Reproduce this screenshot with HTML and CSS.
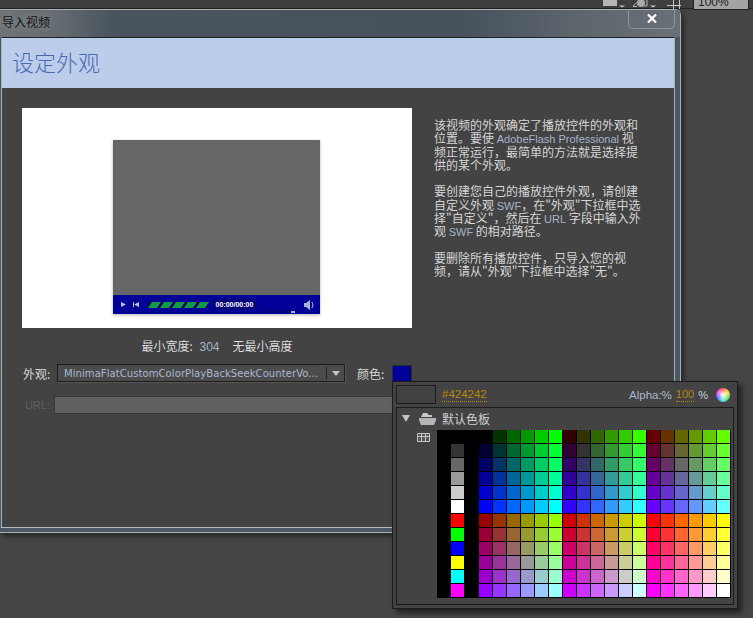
FILE: index.html
```html
<!DOCTYPE html>
<html lang="zh-CN">
<head>
<meta charset="utf-8">
<title>导入视频</title>
<link rel="stylesheet" href="styles.css">
<script src="palette.js" defer></script>
</head>
<body>

<div class="topbar">
	<svg class="topIcons" width="90" height="9" viewBox="0 0 90 9">
		<path d="M0 0h14v6H0z" fill="#b5b5b5"/>
		<path d="M16 5.500h6l-3 2z" fill="#ccc"/>
		<path d="M30 6l7-6M30 6.500h4" stroke="#b5b5b5" fill="none"/>
		<circle cx="38" cy="3" r="4" fill="#a8a8a8"/>
		<path d="M44 0v6h-3" stroke="#b5b5b5" fill="none"/>
		<path d="M47 5.500h6l-3 2z" fill="#ccc"/>
		<path d="M70.500 0v9M76.500 0v9M64 5.500h14" stroke="#c8c8c8" fill="none"/>
	</svg>
	<div class="zoomBox">100%</div>
</div>

<div class="dialog">
	<div class="titlebar">
		<span class="titleText">导入视频</span>
		<div class="closeBtn">
			<svg width="10" height="9" viewBox="0 0 10 9"><path d="M1 .5l8 8M9 .5l-8 8" stroke="#fff" stroke-width="2.200"/></svg>
		</div>
	</div>
	<div class="dialogBody">
		<div class="banner">设定外观</div>
		<div class="mainRow">
			<div class="preview">
				<div class="player">
					<div class="video"></div>
					<div class="controls">
						<svg width="30" height="9" viewBox="0 0 30 9"><path d="M8 2l5 2.500-5 2.500z" fill="#b8c0dd"/><path d="M20 2v5h1V2zM26 2l-5 2.500 5 2.500z" fill="#b8c0dd"/></svg>
						<div class="seekBar">
							<i></i><i></i><i></i><i></i><i></i>
						</div>
						<div class="timeBox">00:00/00:00</div>
						<div class="volume"><b></b></div>
						<svg class="speaker" width="11" height="10" viewBox="0 0 11 10"><path d="M0 3h2l4-3v10L2 7H0z" fill="#aab2d0"/><path d="M8 2q2 3 0 6" stroke="#aab2d0" fill="none"/></svg>
					</div>
				</div>
			</div>
			<div class="helpText">
				<p>该视频的外观确定了播放控件的外观和<br>位置。要使 <span class="latin">AdobeFlash Professional</span> 视<br>频正常运行，最简单的方法就是选择提<br>供的某个外观。</p>
				<p>要创建您自己的播放控件外观，请创建<br>自定义外观 <span class="latin">SWF</span>，在"外观"下拉框中选<br>择"自定义"，然后在 <span class="latin">URL</span> 字段中输入外<br>观 <span class="latin">SWF</span> 的相对路径。</p>
				<p>要删除所有播放控件，只导入您的视<br>频，请从"外观"下拉框中选择"无"。</p>
			</div>
		</div>
		<div class="sizeNote">最小宽度: <span class="num">304</span>&emsp;无最小高度</div>
		<div class="skinRow">
			<label>外观:</label>
			<div class="select">
				<span class="selectText">MinimaFlatCustomColorPlayBackSeekCounterVo...</span>
				<span class="selectArrow"></span>
			</div>
			<label class="colorLabel">颜色:</label>
			<div class="colorChip"></div>
		</div>
		<div class="urlRow">
			<label>URL:</label>
			<div class="urlInput"></div>
		</div>
	</div>
</div>

<div class="picker">
	<div class="pickerTop">
		<div class="curSwatch"></div>
		<span class="hexValue">#424242</span>
		<span class="alphaLabel">Alpha:%</span>
		<span class="alphaValue">100</span>
		<span class="alphaPct">%</span>
		<div class="wheel"></div>
	</div>
	<div class="pickerPanel">
		<div class="folderRow">
			<span class="tri"></span>
			<svg width="17" height="12" viewBox="0 0 17 12"><path d="M4 0h4l2 2h3v2H2z" fill="#c8c8c8"/><path d="M0 5h17v2l-2 5H2L0 7z" fill="#b4b4b4"/></svg>
			<span class="folderName">默认色板</span>
		</div>
		<div class="swatchRow">
			<svg class="gridIcon" width="13" height="9" viewBox="0 0 13 9"><path d="M.5.500h12v8H.5zM.5 3.500h12M4.500.5v8M8.500.5v8" fill="#555" stroke="#c4c4c4"/></svg>
			<div class="swatches" id="swatches"></div>
		</div>
	</div>
</div>

</body>
</html>
```

FILE: styles.css
```css
html, body{
	margin: 0;
	height: 100%;
	overflow: hidden;
}
body{
	position: relative;
	background: #454545;
	font: 12px "Noto Sans CJK SC", "Liberation Sans", sans-serif;
	color: #d6d6d6;
}
.topbar{
	height: 8px;
	background: #3f3f3f;
	border-bottom: 1px solid #222;
	position: relative;
}
.topIcons{
	position: absolute;
	left: 603px;
	top: 0;
}
.zoomBox{
	position: absolute;
	left: 693px;
	top: -5px;
	width: 50px;
	height: 13px;
	border: 1px solid #222;
	background: #a3a3a3;
	color: #222;
	font: 12px/13px "Liberation Sans", sans-serif;
	padding-left: 4px;
	box-sizing: content-box;
}

/* dialog */
.dialog{
	position: absolute;
	left: -1px;
	top: 9px;
	width: 680px;
	height: 522px;
	background: #4c5863;
	border: 1px solid #a9b0b6;
	border-top-right-radius: 6px;
	box-shadow: 3px 3px 5px rgba(0,0,0,.45);
	display: flex;
	flex-direction: column;
}
.titlebar{
	height: 27px;
	flex: none;
	position: relative;
	background: linear-gradient(90deg, #6d7277 0, #666c72 8%, #48535d 17%, #47525c 68%, #5c646c 84%, #6a7077 100%);
}
.titleText{
	position: absolute;
	left: 2px;
	top: 3px;
	color: #111;
	line-height: 18px;
	text-shadow: 0 0 6px #9a9a9a;
}
.closeBtn{
	position: absolute;
	right: 5px;
	top: -1px;
	width: 45px;
	height: 19px;
	border: 1px solid #8d949b;
	border-top: 0;
	border-radius: 0 0 5px 5px;
	display: flex;
	align-items: center;
	justify-content: center;
}
.dialogBody{
	margin: 0 5px 4px 1px;
	flex: 1;
	background: #434343;
	border: 1px solid #b6bcc2;
	border-top: 1px solid #222;
	border-right-color: #a9b0b6;
	border-left-color: #a9b0b6;
}
.banner{
	height: 50px;
	background: #bccdeb;
	color: #4a6ab0;
	font-size: 22px;
	font-weight: 300;
	line-height: 46px;
	padding-left: 10px;
}
.mainRow{
	display: flex;
	padding: 20px 0 0 20px;
}
.preview{
	width: 390px;
	height: 220px;
	background: #fff;
	padding: 32px 0 0 91px;
	box-sizing: border-box;
	flex: none;
}
.player{
	width: 207px;
	box-shadow: 0 1px 3px rgba(0,0,0,.3);
}
.video{
	height: 155px;
	background: #666;
}
.controls{
	height: 19px;
	background: #000099;
	display: flex;
	align-items: center;
}
.seekBar{
	width: 60px;
	height: 6px;
	margin-left: 5px;
	background: #00006b;
	display: flex;
	gap: 3px;
	padding-left: 2px;
	flex: none;
	box-sizing: border-box;
}
.seekBar i{
	width: 9px;
	height: 6px;
	background: #119944;
	transform: skewX(-35deg);
}
.timeBox{
	width: 43px;
	margin-left: 5px;
	background: #00007a;
	color: #fff;
	font: bold 7px/11px "Liberation Sans", sans-serif;
	text-align: center;
	flex: none;
}
.volume{
	width: 33px;
	height: 7px;
	margin: 4px 0 0 6px;
	border-bottom: 1px solid #000066;
	position: relative;
	flex: none;
}
.volume b{
	position: absolute;
	right: 0;
	bottom: -3px;
	width: 4px;
	height: 2px;
	background: #aab2d0;
}
.speaker{
	margin-left: 9px;
}
.helpText{
	margin-left: 22px;
	width: 230px;
	line-height: 13.3px;
	padding-top: 10px;
	white-space: nowrap;
}
.helpText p{
	margin: 0 0 13.3px;
}
.latin{
	color: #a5b4cc;
	font-family: "Liberation Sans", sans-serif;
	font-size: 11px;
	line-height: 0;
}
.sizeNote{
	width: 390px;
	margin: 9px 0 0 20px;
	height: 18px;
	line-height: 18px;
	text-align: center;
	color: #dcdcdc;
}
.num{
	color: #a5b4cc;
	font-family: "Liberation Sans", sans-serif;
	margin: 0 1px 0 4px;
}
.skinRow{
	display: flex;
	align-items: center;
	margin: 9px 0 0 21px;
	height: 18px;
}
.skinRow label{
	width: 34px;
	flex: none;
}
.select{
	width: 288px;
	height: 18px;
	box-sizing: border-box;
	background: #4b4b4b;
	border: 1px solid #1c1c1c;
	box-shadow: 1px 1px 0 #555;
	display: flex;
	align-items: center;
	padding-left: 6px;
	flex: none;
}
.selectText{
	flex: 1;
	color: #a9b8d0;
	font: 10px "DejaVu Sans", sans-serif;
	letter-spacing: .08px;
	white-space: nowrap;
	overflow: hidden;
}
.selectArrow{
	width: 17px;
	height: 12px;
	border-left: 1px solid #222;
	position: relative;
	flex: none;
}
.selectArrow:after{
	content: "";
	position: absolute;
	left: 5px;
	top: 4px;
	border: 4px solid transparent;
	border-top: 5px solid #c4c4c4;
	border-bottom: 0;
}
.skinRow .colorLabel{
	margin-left: 12px;
	width: 35px;
}
.colorChip{
	width: 18px;
	height: 15px;
	background: #000099;
	border: 1px solid #2a2a2a;
	box-sizing: content-box;
}
.urlRow{
	display: flex;
	align-items: center;
	margin: 14px 0 0 23px;
	height: 18px;
}
.urlRow label{
	color: #5f5f5f;
	width: 29px;
	font-family: "Liberation Sans", sans-serif;
	font-size: 11px;
	flex: none;
}
.urlInput{
	width: 340px;
	height: 18px;
	box-sizing: border-box;
	background: #616161;
	border: 1px solid #383838;
}

/* colour picker */
.picker{
	position: absolute;
	left: 392px;
	top: 381px;
	width: 346px;
	height: 228px;
	box-sizing: border-box;
	background: #434343;
	border: 1px solid #1c1c1c;
	box-shadow: 4px 4px 5px rgba(0,0,0,.5);
	padding: 3px;
}
.pickerTop{
	height: 19px;
	display: flex;
	align-items: center;
	margin-bottom: 3px;
	font: 12px "Liberation Sans", sans-serif;
}
.curSwatch{
	width: 40px;
	height: 19px;
	box-sizing: border-box;
	border: 1px solid #1c1c1c;
	background: #424242;
	flex: none;
}
.hexValue{
	margin-left: 6px;
	margin-right: auto;
	color: #b8860b;
	border-bottom: 1px dotted #b8860b;
	font-size: 11.500px;
	line-height: 13px;
}
.alphaLabel{
	color: #a9b8d0;
	font-size: 11.500px;
}
.alphaValue{
	margin-left: 4px;
	color: #b8860b;
	border-bottom: 1px dotted #b8860b;
	font-size: 11px;
	line-height: 13px;
}
.alphaPct{
	margin-left: 4px;
	color: #c8d0dc;
	font-size: 11px;
}
.wheel{
	width: 14px;
	height: 14px;
	margin: 0 4px 0 8px;
	border-radius: 50%;
	background: radial-gradient(circle, #fff 0, rgba(255,255,255,.1) 70%), conic-gradient(#ff3333, #ffdd00, #33dd33, #33dddd, #3344ff, #dd33dd, #ff3333);
	flex: none;
}
.pickerPanel{
	height: 198px;
	box-sizing: border-box;
	border: 1px solid #1c1c1c;
}
.folderRow{
	height: 21px;
	display: flex;
	align-items: center;
	padding-left: 5px;
}
.tri{
	border: 4px solid transparent;
	border-top: 7px solid #c4c4c4;
	border-bottom: 0;
	margin-right: 9px;
	flex: none;
}
.folderName{
	margin-left: 6px;
	color: #d0d0d0;
}
.swatchRow{
	display: flex;
	padding-top: 1px;
}
.gridIcon{
	margin: 3px 0 0 20px;
	flex: none;
}
.swatches{
	margin-left: 7px;
	display: grid;
	grid-template-columns: repeat(21, 13px);
	grid-auto-rows: 13px;
	gap: 1px;
	background: #000;
	padding-bottom: 1px;
	padding-right: 1px;
	align-self: flex-start;
}
```

FILE: palette.js
```js
// flash default palette: 3 key columns, then 18 x 12 web colours
var steps = ["00","33","66","99","cc","ff"];
var keys = ["000000","333333","666666","999999","cccccc","ffffff","ff0000","00ff00","0000ff","ffff00","00ffff","ff00ff"];
var box = document.getElementById("swatches");

function addCell(color){
	var c = document.createElement("div");
	c.style.background = "#" + color;
	box.appendChild(c);
}

for(var row = 0; row < 12; row++){
	addCell("000000");
	addCell(keys[row]);
	addCell("000000");
	var blue = steps[row % 6];
	var block = row < 6 ? 0 : 3;
	for(var col = 0; col < 18; col++){
		var red = steps[block + Math.floor(col / 6)];
		var green = steps[col % 6];
		addCell(red + green + blue);
	}
}
```
